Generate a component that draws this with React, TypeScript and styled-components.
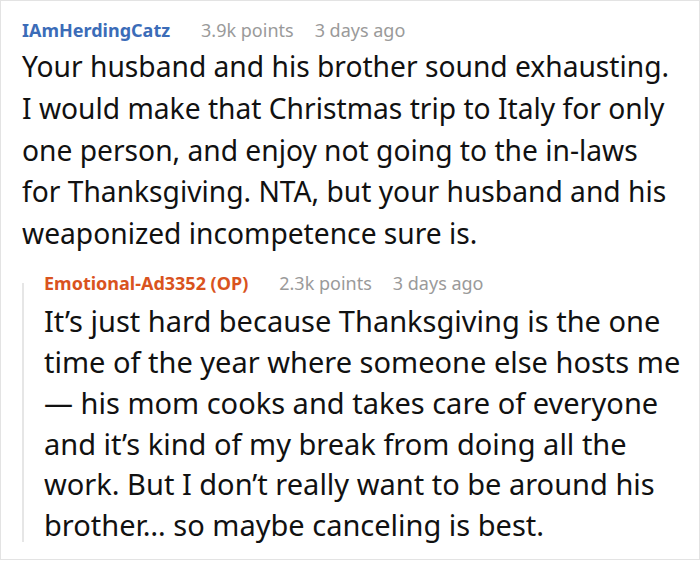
import React from 'react';
import styled, { createGlobalStyle } from 'styled-components';

const GlobalStyle = createGlobalStyle`
  html, body {
    margin: 0;
    padding: 0;
    background: #fff;
  }
  body {
    font-family: "Noto Sans", "Open Sans", sans-serif;
  }
`;

type CommentData = {
  author: string;
  op?: boolean;
  points: string;
  age: string;
  lines: string[];
};

const parent: CommentData = {
  author: 'IAmHerdingCatz',
  points: '3.9k points',
  age: '3 days ago',
  lines: [
    'Your husband and his brother sound exhausting.',
    'I would make that Christmas trip to Italy for only',
    'one person, and enjoy not going to the in-laws',
    'for Thanksgiving. NTA, but your husband and his',
    'weaponized incompetence sure is.',
  ],
};

const reply: CommentData = {
  author: 'Emotional-Ad3352 (OP)',
  op: true,
  points: '2.3k points',
  age: '3 days ago',
  lines: [
    'It\u2019s just hard because Thanksgiving is the one',
    'time of the year where someone else hosts me',
    '\u2014 his mom cooks and takes care of everyone',
    'and it\u2019s kind of my break from doing all the',
    'work. But I don\u2019t really want to be around his',
    'brother\u2026 so maybe canceling is best.',
  ],
};

type BodyStyle = { size: number; lineHeight: number; gap: number };

function Comment({ data, body }: { data: CommentData; body: BodyStyle }) {
  return (
    <>
      <Meta>
        <Author $op={data.op}>{data.author}</Author>
        <Points>{data.points}</Points>
        <Age>{data.age}</Age>
      </Meta>
      <Body $size={body.size} $lh={body.lineHeight} $gap={body.gap}>
        {data.lines.map((l, i) => (
          <Line key={i}>{l}</Line>
        ))}
      </Body>
    </>
  );
}

export default function App() {
  return (
    <>
      <GlobalStyle />
      <Frame>
        <Thread>
          <Comment data={parent} body={{ size: 28.2, lineHeight: 41.8, gap: 3 }} />
          <Reply>
            <Comment data={reply} body={{ size: 29, lineHeight: 40.8, gap: 5.3 }} />
          </Reply>
        </Thread>
      </Frame>
    </>
  );
}

const Frame = styled.div`
  width: 700px;
  height: 560px;
  box-sizing: border-box;
  border: 1px solid #e3e3e3;
  overflow: hidden;
  background: #fff;
`;

const Thread = styled.div`
  padding: 16px 0 0 21px;
`;

const Meta = styled.div`
  display: flex;
  align-items: baseline;
  font-size: 18px;
  line-height: 26px;
  white-space: nowrap;
`;

const Author = styled.span<{ $op?: boolean }>`
  font-weight: 700;
  color: ${(p) => (p.$op ? '#d9531e' : '#3b6cb8')};
  margin-right: 31px;
`;

const Points = styled.span`
  color: #9a9a9a;
  margin-right: 21px;
`;

const Age = styled.span`
  color: #9a9a9a;
`;

const Body = styled.div<{ $size: number; $lh: number; $gap: number }>`
  font-size: ${(p) => p.$size}px;
  line-height: ${(p) => p.$lh}px;
  margin-top: ${(p) => p.$gap}px;
  color: #111;
`;

const Line = styled.span`
  display: block;
  white-space: nowrap;
`;

const Reply = styled.div`
  position: relative;
  margin-top: 15px;
  padding-left: 22px;

  &::before {
    content: '';
    position: absolute;
    left: 0;
    top: 13px;
    bottom: 4px;
    width: 2px;
    background: #e6e6e6;
  }
`;
